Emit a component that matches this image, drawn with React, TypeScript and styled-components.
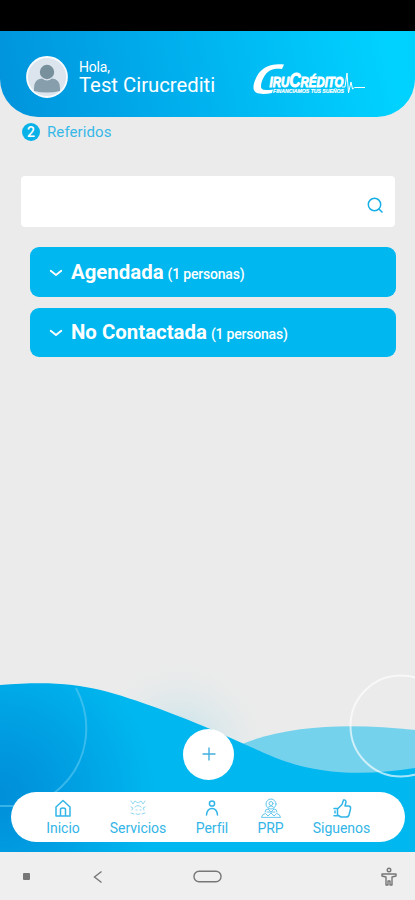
import React from 'react';
import styled, { createGlobalStyle } from 'styled-components';

const GlobalStyle = createGlobalStyle`
  * { box-sizing: border-box; }
  body { margin: 0; background: #ebebeb; font-family: Roboto, sans-serif; overflow: hidden; }
  button { font: inherit; border: 0; padding: 0; background: none; }
`;

const Screen = styled.div`
  width: 415px;
  height: 900px;
  display: flex;
  flex-direction: column;
  background: #ebebeb;
  overflow: hidden;
`;

const StatusBar = styled.div`
  height: 31px;
  flex: none;
  background: #000;
`;

const Header = styled.header`
  height: 86px;
  flex: none;
  display: flex;
  align-items: flex-start;
  padding: 25px 0 0 26px;
  border-radius: 0 0 38px 38px;
  background: linear-gradient(78deg, #0093dc 0%, #00b4f0 50%, #00d2ff 93%);
  color: #fff;
`;

const Avatar = styled.svg`
  width: 42px;
  height: 42px;
  flex: none;
`;

const Greeting = styled.div`
  width: 185px;
  padding: 3px 0 0 11px;
  white-space: nowrap;
`;

const Hello = styled.div`
  font-size: 14px;
  line-height: 16px;
  letter-spacing: -0.2px;
`;

const UserName = styled.div`
  font-size: 20.3px;
  line-height: 20px;
`;

const Brand = styled.svg`
  width: 114px;
  height: 34px;
  margin-top: 6px;
  flex: none;
`;

const Content = styled.main`
  display: flex;
  flex-direction: column;
  flex: none;
  height: 567px;
`;

const Referrals = styled.div`
  display: flex;
  align-items: center;
  gap: 7px;
  height: 20px;
  margin: 5px 0 0 22px;
  color: #36b8e8;
  font-size: 15px;
  letter-spacing: 0.1px;
`;

const Count = styled.span`
  width: 18px;
  height: 18px;
  border-radius: 50%;
  background: #08b2e9;
  color: #fff;
  font-size: 14px;
  font-weight: 500;
  line-height: 18px;
  text-align: center;
`;

const SearchBox = styled.div`
  display: flex;
  justify-content: flex-end;
  align-items: center;
  width: 374px;
  height: 51px;
  margin: 34px 0 0 21px;
  padding: 8px 10px 0 0;
  border-radius: 4px;
  background: #fff;
`;

const Groups = styled.div`
  display: flex;
  flex-direction: column;
  gap: 11px;
  padding: 20px 18.6px 0 30.4px;
`;

const GroupRow = styled.button`
  display: flex;
  align-items: center;
  height: 49.5px;
  padding-left: 18.6px;
  border-radius: 9px;
  background: #00b7ef;
  color: #fff;
  text-align: left;
`;

const GroupTitle = styled.span`
  margin-left: 8px;
  font-size: 20.4px;
  font-weight: 700;
  white-space: nowrap;
`;

const GroupCount = styled.span`
  margin: 4px 0 0 4px;
  font-size: 14px;
  font-weight: 500;
  letter-spacing: -0.2px;
  white-space: nowrap;
`;

const Footer = styled.footer`
  position: relative;
  flex: none;
  height: 168px;
  display: flex;
  flex-direction: column;
  align-items: center;
  padding-top: 45px;
`;

const Waves = styled.svg`
  position: absolute;
  left: 0;
  bottom: 0;
  width: 415px;
  height: 212px;
`;

const AddButton = styled.button`
  position: relative;
  display: flex;
  align-items: center;
  justify-content: center;
  flex: none;
  width: 51px;
  height: 51px;
  margin-left: 2px;
  padding-bottom: 1px;
  border-radius: 50%;
  background: #fff;
`;

const TabBar = styled.nav`
  position: relative;
  display: flex;
  flex: none;
  width: 394px;
  height: 50px;
  margin-top: 12px;
  padding: 6px 0 0 24.5px;
  border-radius: 25px;
  background: #fff;
`;

const Tab = styled.div<{ $width: number }>`
  display: flex;
  flex-direction: column;
  align-items: center;
  width: ${p => p.$width}px;
  color: #33b5e7;
  font-size: 14px;
  line-height: 16px;
  letter-spacing: -0.05px;
  white-space: nowrap;
`;

const TabIcon = styled.svg`
  width: 22px;
  height: 22px;
  margin-top: -1px;
  margin-bottom: 1px;
  fill: none;
  stroke: currentColor;
  stroke-width: 1.5;
  stroke-linecap: round;
  stroke-linejoin: round;
`;

const SystemBar = styled.div`
  flex: none;
  display: grid;
  grid-template-columns: 70px 99px 186px 1fr;
  align-items: center;
  height: 48px;
  padding: 1px 0 0 23px;
  background: #efefef;
`;

const SystemIcon = styled.svg`
  fill: none;
  stroke: #777;
  stroke-width: 1.4;
`;

const groups = ['Agendada', 'No Contactada'];

const tabs = [
  { label: 'Inicio', width: 56, icon: <path d="M4 10 11 3.5 18 10V19H4ZM8.5 18V12.5Q8.5 11 11 11T13.5 12.5V18" /> },
  {
    label: 'Servicios', width: 94,
    icon: (
      <g strokeWidth=".9" opacity=".6">
        <path d="M4 4 6 7 8 4 11 6 14 4 16 7 18 4" />
        <path d="M4 10 6 11 5 13M18 10 16 11 17 13M4 16 7 17M18 16 15 17" />
        <path d="M8 10Q11 7 14 10M9 13H10M13 13H14M9 17Q11 18 13 17" />
      </g>
    ),
  },
  { label: 'Perfil', width: 54, icon: <g><circle cx="11" cy="6.5" r="2.6" /><path d="M5.5 18C6 13 8 11.5 11 11.5S16 13 16.5 18" /></g> },
  {
    label: 'PRP', width: 63,
    icon: (
      <g strokeWidth="1" opacity=".75">
        <circle cx="11" cy="7" r="5" /><circle cx="11" cy="6.5" r="2" />
        <path d="M8.5 10Q11 7.5 13.5 10M5 15Q5 12 8 12L11 15 14 12Q17 12 17 15M1.5 20Q2 17 5.5 16.5L8 19 11 16 14 19 16.5 16.5Q20 17 20.5 20ZM7 15H15" />
      </g>
    ),
  },
  { label: 'Siguenos', width: 79, icon: <path d="M3 18.8H6.5V11.5H3M6.5 12 11 7.5 12.5 3Q15 2.5 15 5L14 9H18Q20 9.5 19.5 12L18 18Q17.5 20 15 20H10L6.5 18M4 14V16" /> },
];

export default function App() {
  return (
    <>
      <GlobalStyle />
      <Screen>
        <StatusBar />
        <Header>
          <Avatar viewBox="0 0 42 42">
            <circle cx="21" cy="21" r="20" fill="#dce5ed" stroke="#f8fcff" strokeWidth="1.8" />
            <path d="M8 35V32Q8 23 16 22.5 21 26.5 26 22.5 34 23 34 32V35Q21 38 8 35" fill="#879eac" />
            <circle cx="21" cy="16" r="7.2" fill="#78909c" />
          </Avatar>
          <Greeting><Hello>Hola,</Hello><UserName>Test Cirucrediti</UserName></Greeting>
          <Brand viewBox="0 0 114 34" fill="#fff" fontFamily="Liberation Sans" fontStyle="italic" fontWeight="700">
            <path d="M31 2.5C18 1 9 5 4 14 0 22 -1 28 3 30.5 7 32.5 13 32 19 31L20 27.5C13 28.5 8 28.5 8 24.5 8 19 12 11 17 8.5 20 6.5 25 6.5 29 7Z" />
            <text x="16.5" y="24.7" fontSize="14.5" textLength="74" lengthAdjust="spacingAndGlyphs" stroke="#fff" strokeWidth=".9">
              IRU<tspan fontSize="20">C</tspan>RÉDITO
            </text>
            <text x="20" y="31" fontSize="5.6" textLength="71" lengthAdjust="spacingAndGlyphs" stroke="#fff" strokeWidth=".2">FINANCIAMOS TUS SUEÑOS</text>
            <path d="M89 25H92L94 11 95.5 31 98 20 99.5 27 101.5 25.5H112" fill="none" stroke="#fff" strokeWidth="1" />
          </Brand>
        </Header>
        <Content>
          <Referrals><Count>2</Count>Referidos</Referrals>
          <SearchBox>
            <svg width="19" height="19" viewBox="0 0 19 19" fill="none" stroke="#16afe5" strokeWidth="1.5">
              <circle cx="8.5" cy="8.5" r="6.2" /><path d="m13 13 3.5 3.5" />
            </svg>
          </SearchBox>
          <Groups>
            {groups.map(name => (
              <GroupRow key={name}>
                <svg width="14" height="14" viewBox="0 0 14 14" fill="none" stroke="#fff" strokeWidth="1.8" strokeLinecap="round" strokeLinejoin="round"><path d="M1.7 5.7 7 10 12.3 5.7" /></svg>
                <GroupTitle>{name}</GroupTitle><GroupCount>(1 personas)</GroupCount>
              </GroupRow>
            ))}
          </Groups>
        </Content>
        <Footer>
          <Waves viewBox="0 640 415 212">
            <defs>
              <radialGradient id="water" gradientUnits="userSpaceOnUse" cx="0" cy="795" r="155">
                <stop stopColor="#008fd9" /><stop offset=".3" stopColor="#0098df" /><stop offset="1" stopColor="#00b7ef" />
              </radialGradient>
              <radialGradient id="glow" gradientUnits="userSpaceOnUse" cx="180" cy="750" r="95">
                <stop stopColor="#8ed9ed" stopOpacity=".55" /><stop offset="1" stopColor="#ebebeb" stopOpacity="0" />
              </radialGradient>
            </defs>
            <circle cx="180" cy="750" r="95" fill="url(#glow)" />
            <path d="M235 747C285 724 352 723 415 730V790H235Z" fill="#75d2ed" />
            <path d="M0 685C76 679 103 689 160 709 216 730 238 742 276 758 320 775 365 776 415 768V852H0Z" fill="url(#water)" />
            <path d="M76 688C93 720 91 765 53 794M0 806H15" fill="none" stroke="#5bcaf1" strokeOpacity=".6" strokeWidth="2" />
            <circle cx="401" cy="726" r="50.5" fill="none" stroke="#fff" strokeOpacity=".65" strokeWidth="2" />
          </Waves>
          <AddButton><svg width="16" height="16" viewBox="0 0 16 16" stroke="#42afe0" strokeWidth="1.4"><path d="M8 1.5V14.5M1.5 8H14.5" /></svg></AddButton>
          <TabBar>
            {tabs.map(t => <Tab key={t.label} $width={t.width}><TabIcon viewBox="0 0 22 22">{t.icon}</TabIcon>{t.label}</Tab>)}
          </TabBar>
        </Footer>
        <SystemBar>
          <SystemIcon width="7" height="7"><rect width="7" height="7" rx="1" fill="#777" stroke="none" /></SystemIcon>
          <SystemIcon width="11" height="14"><path d="M8.5 1.5 1.5 7 8.5 12.5" /></SystemIcon>
          <SystemIcon width="31" height="13"><rect x="2" y="1.2" width="27" height="10.5" rx="5" /></SystemIcon>
          <SystemIcon width="22" height="20" viewBox="0 0 22 20"><circle cx="11" cy="3" r="1.8" /><path d="M4 7H18V9L14 10V18H12V14H10V18H8V10L4 9Z" strokeLinejoin="round" /></SystemIcon>
        </SystemBar>
      </Screen>
    </>
  );
}
